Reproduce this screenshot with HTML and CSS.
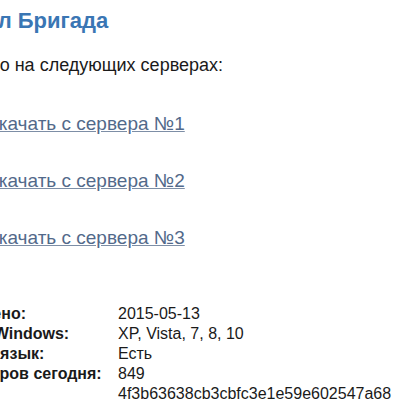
FILE: index.html
```html
<html>

<head>
  <title>Сериал Бригада</title>
  <meta charset="utf-8">
  <link rel="stylesheet" href="styles.css">
</head>

<body>
  <div class="page">
    <h1 class="title">Скачать сериал Бригада</h1>
    <p class="lead">Скачать бесплатно на следующих серверах:</p>

    <ul class="mirrors">
      <li><a href="#">Скачать с сервера №1</a></li>
      <li><a href="#">Скачать с сервера №2</a></li>
      <li><a href="#">Скачать с сервера №3</a></li>
    </ul>

    <table class="info">
      <tr><th>Обновлено:</th><td>2015-05-13</td></tr>
      <tr><th>Версия Windows:</th><td>XP, Vista, 7, 8, 10</td></tr>
      <tr><th>Русский язык:</th><td>Есть</td></tr>
      <tr><th>Просмотров сегодня:</th><td>849</td></tr>
      <tr><th>MD5:</th><td>4f3b63638cb3cbfc3e1e59e602547a68</td></tr>
    </table>
  </div>
</body>

</html>
```

FILE: styles.css
```css
body {
  margin: 0;
  background-color: white;
  color: #1a1a1a;
  font-family: "Liberation Sans", Arial, sans-serif;
  overflow: hidden;
}

.page {
  padding-top: 8px;
}

.title {
  margin: 0 0 0 -160px;
  font-size: 22px;
  line-height: 26px;
  font-weight: bold;
  color: #3a76b4;
  white-space: nowrap;
}

.lead {
  margin: 20px 0 0 -150px;
  font-size: 18px;
  line-height: 22px;
  white-space: nowrap;
}

.mirrors {
  list-style: none;
  margin: 37px 0 0 -15px;
  padding: 0;
}

.mirrors li {
  font-size: 19px;
  line-height: 22px;
  margin-bottom: 35px;
  white-space: nowrap;
}

.mirrors a {
  color: #52698a;
  text-decoration: underline;
  text-decoration-color: #7d8ea6;
}

.info {
  margin: 55px 0 0 -69px;
  border-spacing: 0;
  font-size: 16px;
}

.info th {
  width: 187px;
  padding: 0;
  text-align: left;
  line-height: 20px;
  white-space: nowrap;
}

.info td {
  padding: 0;
  line-height: 20px;
  white-space: nowrap;
}
```
